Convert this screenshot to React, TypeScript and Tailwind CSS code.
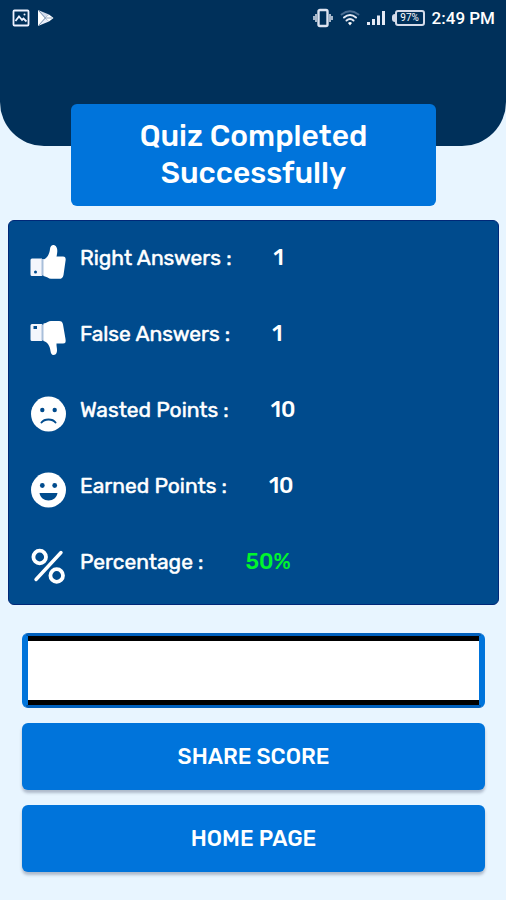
import type { ReactNode } from "react";

function ThumbUp() {
  return (
    <svg viewBox="0 0 36 36" className="size-9" aria-hidden="true">
      <path fill="#f4f6fc" fillRule="evenodd" d="M2 14.500H12V32H2Q.500 32 .500 30.500V16Q.500 14.500 2 14.500ZM5.500 26.400A1.500 1.500 0 1 0 5.500 29.400A1.500 1.500 0 1 0 5.500 26.400Z" />
      <path fill="#a9bfda" d="M11.500 15H14V31.500H11.500Z" />
      <path fill="#fff" d="M13.500 15.500C17 14.500 19.500 10 20 5C20.300 1.500 22.500 .500 24.500 1.200C27.500 2.500 28 7 26.500 12.500H33C35.500 12.500 36 14.500 35.500 17L33.500 31C33 34 31.500 34.800 29 34.800H21C18.500 34.800 17 32.500 13.500 32Z" />
    </svg>
  );
}

function ThumbDown() {
  return (
    <svg viewBox="0 0 36 36" className="size-9" aria-hidden="true">
      <path fill="#f4f6fc" fillRule="evenodd" d="M2 4H12V21H2Q.500 21 .500 19.500V5.500Q.500 4 2 4ZM3.500 6V9H7V6Z" />
      <path fill="#a9bfda" d="M11.500 4.500H14V20.500H11.500Z" />
      <path fill="#fff" d="M13.500 3.500C17 3 18.500 1 21 1H29C31.500 1 32.500 2 33 4.500L35.500 19C36 22 35.500 23.500 33 23.500H26.500C26.300 26.500 27.200 28 27 31C26.700 34 25 35 23.500 35C21.500 35 20.800 33 20.500 31C20 26 17.500 22 13.500 21Z" />
    </svg>
  );
}

function SadFace() {
  return (
    <svg viewBox="0 0 36 36" className="size-9" aria-hidden="true">
      <circle cx="18.500" cy="18" r="17.500" fill="#fff" />
      <circle cx="12.300" cy="14" r="2.200" fill="#004b8d" />
      <circle cx="24.700" cy="14" r="2.200" fill="#004b8d" />
      <path d="M11.500 26.500C14.500 22.500 22.500 22.500 25.500 26.500" fill="none" stroke="#004b8d" strokeWidth="2" strokeLinecap="round" />
    </svg>
  );
}

function HappyFace() {
  return (
    <svg viewBox="0 0 36 36" className="size-9" aria-hidden="true">
      <circle cx="18.500" cy="18" r="17.500" fill="#fff" />
      <circle cx="12.300" cy="13.500" r="2.400" fill="#004b8d" />
      <circle cx="24.700" cy="13.500" r="2.400" fill="#004b8d" />
      <path d="M9.500 21H27.500C27 25.500 23 28.500 18.500 28.500S10 25.500 9.500 21Z" fill="#004b8d" />
    </svg>
  );
}

function PercentSign() {
  return (
    <svg viewBox="0 0 36 36" className="size-9" aria-hidden="true" fill="none" stroke="#fff" strokeWidth="3.800">
      <circle cx="9.700" cy="9" r="6.300" />
      <circle cx="26.700" cy="27.500" r="6.300" />
      <path d="M31 4.500L6 31.500" strokeLinecap="round" strokeWidth="3.400" />
    </svg>
  );
}

function StatusBar() {
  return (
    <div className="flex h-9 items-center justify-between pr-[11px] pl-3">
      <div className="flex items-center gap-[7px]">
        <svg viewBox="0 0 18 18" className="size-[18px]" aria-hidden="true" fill="none" stroke="#eef2ff">
          <rect x="1.500" y="1.500" width="15" height="15" rx="1" strokeWidth="1.800" />
          <path d="M3.500 12L7 7.500L10 11L11.500 9.500L14.500 12.500" strokeWidth="1.800" />
          <circle cx="12.500" cy="5.500" r="1" fill="#eef2ff" stroke="none" />
        </svg>
        <svg viewBox="0 0 17 18" className="h-[18px] w-[17px]" aria-hidden="true">
          <path d="M1 1L1 17L8 9Z" fill="#fff" />
          <path d="M1 1L12 5.500L8 9Z" fill="#d3dcec" />
          <path d="M1 17L12 12.500L8 9Z" fill="#e9eefa" />
          <path d="M12 5.500L16.500 9L12 12.500L8 9Z" fill="#fff" />
          <path d="M2 2L8.500 9L2 16M8.500 9H15" fill="none" stroke="#7890ad" strokeWidth=".8" />
        </svg>
      </div>
      <div className="flex items-center gap-[7px] text-white">
        <svg viewBox="0 0 20 20" className="size-5" aria-hidden="true" fill="none" stroke="#dde3f0">
          <rect x="5.500" y="2" width="9" height="16" rx="1.500" strokeWidth="2.400" />
          <path d="M3 6V14M17 6V14M1 8V12M19 8V12" strokeWidth="1.500" />
        </svg>
        <svg viewBox="0 0 20 18" className="h-[18px] w-5" aria-hidden="true" fill="none" strokeLinecap="round">
          <path d="M1.500 5.500Q10 -1 18.500 5.500" stroke="#4b6d92" strokeWidth="1.800" />
          <path d="M4 8.500Q10 3.500 16 8.500M6.500 11.500Q10 8.500 13.500 11.500" stroke="#e5eaf5" strokeWidth="2" />
          <path d="M8 14Q10 12.200 12 14L10 16.500Z" fill="#fff" />
        </svg>
        <svg viewBox="0 0 18 16" className="h-4 w-[18px]" aria-hidden="true" fill="#e5eaf5">
          <path d="M0 12H3V15H0ZM5 9H8V15H5ZM10 5.500H13V15H10ZM15 1H18V15H15Z" />
        </svg>
        <div className="flex items-center">
          <span className="h-2 w-[3px] rounded-l-sm bg-[#d5dbe9]" />
          <span className="flex h-4 w-[30px] items-center justify-center rounded-[3px] border-2 border-[#d5dbe9] font-['Roboto',sans-serif] text-[10px] leading-none">97%</span>
        </div>
        <span className="font-['Roboto',sans-serif] text-[17px] leading-5 font-medium whitespace-nowrap">2:49 PM</span>
      </div>
    </div>
  );
}

type Result = { icon: ReactNode; label: string; value: string; valueColor: string };

const results: Result[] = [
  { icon: <ThumbUp />, label: "Right Answers :", value: "1", valueColor: "text-white" },
  { icon: <ThumbDown />, label: "False Answers :", value: "1", valueColor: "text-white" },
  { icon: <SadFace />, label: "Wasted Points :", value: "10", valueColor: "text-white" },
  { icon: <HappyFace />, label: "Earned Points :", value: "10", valueColor: "text-white" },
  { icon: <PercentSign />, label: "Percentage :", value: "50%", valueColor: "text-[#00f52d]" },
];

function ActionButton({ children }: { children: ReactNode }) {
  return (
    <button type="button" className="h-[67px] w-full rounded-md bg-[#0074db] text-[22px] leading-7 font-medium text-white shadow-[0_3px_3px_rgba(40,50,80,0.3)]">
      {children}
    </button>
  );
}

export default function App() {
  return (
    <div className="min-h-screen bg-[#e8f5ff] font-['Rubik','Roboto',sans-serif]">
      <header className="h-[146px] rounded-b-[44px] bg-[#00305a]">
        <StatusBar />
      </header>
      <main className="pl-px">
        <h1 className="relative mx-[70px] -mt-[42px] rounded-md bg-[#0074db] px-12 py-[14px] text-center text-[30px] leading-[37px] font-medium text-white">
          Quiz Completed Successfully
        </h1>
        <dl className="mx-[7px] mt-[14px] rounded-md border border-[#002878] bg-[#004b8d] pt-[3px]">
          {results.map((r) => (
            <div key={r.label} className="flex h-[76px] items-center pl-[21px]">
              {r.icon}
              <dt className="ml-[14px] pb-2 text-[21px] leading-7 text-white [-webkit-text-stroke:0.5px]">{r.label}</dt>
              <dd className={`ml-[42px] pb-2 text-[22px] leading-7 font-medium ${r.valueColor}`}>{r.value}</dd>
            </div>
          ))}
        </dl>
        <div className="mx-[21px] mt-7 flex flex-col gap-[15px]">
          <div className="h-[75px] rounded-md border-x-[6px] border-y-[3px] border-x-[#0074db] border-y-[#0060bd] bg-black py-[5px]">
            <div className="h-full bg-white" />
          </div>
          <ActionButton>SHARE SCORE</ActionButton>
          <ActionButton>HOME PAGE</ActionButton>
        </div>
      </main>
    </div>
  );
}
